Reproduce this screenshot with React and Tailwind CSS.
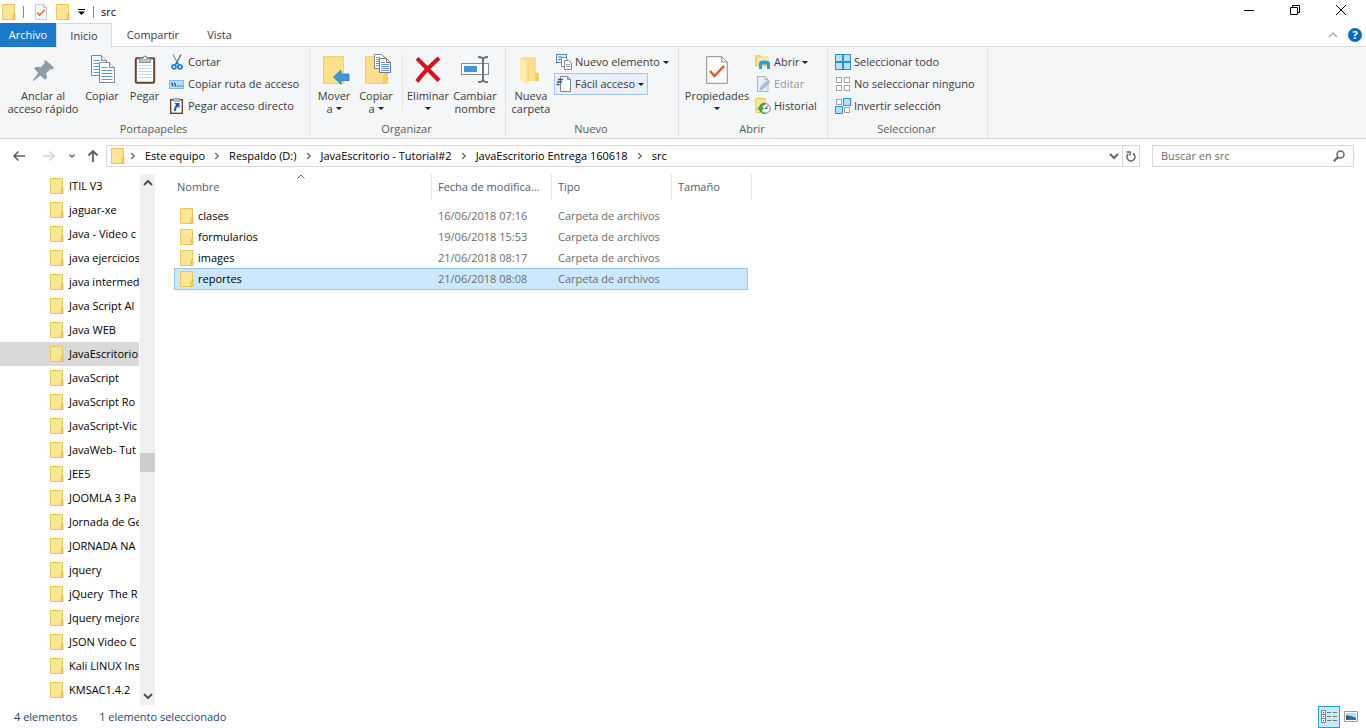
import React from "react";

/* ---------- icons ---------- */

function Folder({ className = "h-4 w-4" }) {
  return (
    <svg viewBox="0 0 16 16" className={`${className} shrink-0`} aria-hidden="true">
      <path d="M1.500.500h12v15h-12z" fill="#ffe594" stroke="#ecc65b" />
      <path d="M12 15.500V10.500l2-1.500v6.500z" fill="#f7d36a" stroke="#e6b93f" strokeWidth=".8" />
    </svg>
  );
}

function Chevron({ className = "" }) {
  return (
    <svg viewBox="0 0 6 8" className={`h-2 w-1.5 shrink-0 ${className}`} fill="none" stroke="#6b6b6b" strokeWidth="1.400" aria-hidden="true">
      <path d="M1.200 1l3 3-3 3" />
    </svg>
  );
}

function Caret() {
  return (
    <svg viewBox="0 0 6 3" className="inline-block h-[3px] w-1.5 shrink-0" fill="#1e1e1e" aria-hidden="true">
      <path d="M0 0h6L3 3z" />
    </svg>
  );
}

function CheckPage({ className }) {
  return (
    <svg viewBox="0 0 22 28" className={className} fill="none" aria-hidden="true">
      <path d="M.7.700h15L21.300 6v21.300H.7z" fill="#fdfdfd" stroke="#8c8c8c" />
      <path d="M15.700.700V6h5.600" stroke="#8c8c8c" />
      <path d="M4 15l4.500 5L18 10" stroke="#e2581f" strokeWidth="2.400" />
    </svg>
  );
}

function PinIcon() {
  return (
    <svg viewBox="0 0 32 32" className="h-8 w-8" aria-hidden="true">
      <path d="M18.500 6l8.500 7.500-1.800 2.200-1.700-.7-4.200 4.200.7 4.800-2 1.800-4.600-4.400L6.500 27 5.800 26.200l5.400-7.100L7 14.600l1.900-1.900 4.700.6L17.800 9l-.8-1.500z" fill="#909ba5" />
    </svg>
  );
}

function Sheet({ x, y }) {
  return (
    <g transform={`translate(${x} ${y})`}>
      <path d="M.5.500h10l5 5v15h-15z" fill="#fff" stroke="#7c8795" />
      <path d="M10.500.500v5h5" fill="#eef3f9" stroke="#7c8795" />
      <path d="M2.500 5.500h6M2.500 8.500h11M2.500 11.500h11M2.500 14.500h11M2.500 17.500h11" stroke="#5b9bdc" />
    </g>
  );
}

function CopyIcon() {
  return (
    <svg viewBox="0 0 32 32" className="h-8 w-8" aria-hidden="true">
      <Sheet x={5} y={1} />
      <Sheet x={13} y={8} />
    </svg>
  );
}

function PasteIcon() {
  return (
    <svg viewBox="0 0 32 32" className="h-8 w-8" aria-hidden="true">
      <rect x="6.800" y="4.300" width="18.400" height="24.400" rx="1" fill="#fdfdff" stroke="#6a4430" strokeWidth="2" />
      <path d="M9 11.500h14M9 14.500h14M9 17.500h14M9 20.500h14M9 23.500h14" stroke="#bcd9f2" />
      <path d="M10.500 4.500h3a2.500 2.500 0 0 1 5 0h3v4h-11z" fill="#b9bfc5" stroke="#8a9097" />
      <circle cx="16" cy="4" r="1" fill="#fff" />
    </svg>
  );
}

function ScissorsIcon() {
  return (
    <svg viewBox="0 0 16 16" className="h-4 w-4" fill="none" aria-hidden="true">
      <path d="M4 .5l5 9.500" stroke="#9aa3ab" strokeWidth="1.600" />
      <path d="M12 .5l-5 9.500" stroke="#6f7c87" strokeWidth="1.600" />
      <circle cx="5" cy="12.800" r="2" stroke="#1d83d2" strokeWidth="1.800" />
      <circle cx="11" cy="12.800" r="2" stroke="#1d83d2" strokeWidth="1.800" />
      <path d="M6 11L8 8.500l2 2.500" stroke="#1d83d2" strokeWidth="1.500" />
    </svg>
  );
}

function PathIcon() {
  return (
    <svg viewBox="0 0 16 16" className="h-4 w-4" fill="none" aria-hidden="true">
      <rect x=".5" y="4.500" width="14" height="8" fill="#b5def8" stroke="#8ab9dc" />
      <path d="M2.500 6.500l1.600 4M5.300 6.500l1.600 4" stroke="#1b4a75" strokeWidth="1.200" />
      <path d="M8 10h1.300M10.200 10h1.300M12.300 10h1.300" stroke="#1b4a75" strokeWidth="1.200" />
    </svg>
  );
}

function PasteShortcutIcon() {
  return (
    <svg viewBox="0 0 16 16" className="h-4 w-4" fill="none" aria-hidden="true">
      <rect x="1.700" y="1.700" width="11.600" height="13.600" fill="#fff" stroke="#6a4430" strokeWidth="1.400" />
      <path d="M4.500.5h6v2.700h-6z" fill="#b9bfc5" stroke="#858b92" strokeWidth=".7" />
      <path d="M5.300 5h5.200v5.200L8.900 8.600C7.400 9.800 7 11.200 7 13H5c0-2.600.6-4.400 2.200-6z" fill="#1b5fa8" />
    </svg>
  );
}

function MoveIcon() {
  return (
    <svg viewBox="0 0 32 32" className="h-8 w-8" aria-hidden="true">
      <path d="M5.500 2.500h20v27h-20z" fill="#fbdf8b" stroke="#efcf72" />
      <path d="M25.500 19.500h1v10h-3V21z" fill="#f3cf6a" />
      <path d="M15.500 23l7.500-7v4h8v6.500h-8v4z" fill="#3d97dc" stroke="#2b7cbe" strokeWidth=".8" />
    </svg>
  );
}

function CopyToIcon() {
  return (
    <svg viewBox="0 0 32 32" className="h-8 w-8" aria-hidden="true">
      <path d="M5.500 2.500h20v27h-20z" fill="#fbdf8b" stroke="#efcf72" />
      <path d="M23.500 29.500V21l4-2v10.500z" fill="#f3cf6a" stroke="#e9c253" strokeWidth=".6" />
      <path d="M14.500.500h7l3 3v11h-10z" fill="#fff" stroke="#7c8795" />
      <path d="M16 3.500h4M16 5.500h4M16 7.500h4M16 9.500h4M16 11.500h4" stroke="#5b9bdc" />
      <path d="M19.500 4.500h7l4 4v10h-11z" fill="#fff" stroke="#6f7a88" />
      <path d="M26.500 4.500v4h4" fill="none" stroke="#6f7a88" />
      <path d="M21 8.500h4M21 10.500h8M21 12.500h8M21 14.500h8M21 16.500h8" stroke="#5b9bdc" />
    </svg>
  );
}

function DeleteIcon() {
  return (
    <svg viewBox="0 0 32 32" className="h-8 w-8" aria-hidden="true">
      <path d="M5 4.500c4 3.500 16 16 22 22M27 4C21 9.500 9 21.500 5 27.500" stroke="#d8121c" strokeWidth="4.200" fill="none" />
    </svg>
  );
}

function RenameIcon() {
  return (
    <svg viewBox="0 0 32 32" className="h-8 w-8" fill="none" aria-hidden="true">
      <rect x="2.500" y="9.500" width="27" height="11" fill="#fff" stroke="#858c93" />
      <path d="M5 12h13v6H5z" fill="#3d97dc" />
      <path d="M19 3c3 0 5 1 5 2.500C24 4 26 3 29 3M24 5v22M19 28c3 0 5-1 5-2.500 0 1.500 2 2.500 5 2.500" stroke="#6c7278" strokeWidth="2" />
    </svg>
  );
}

function NewFolderIcon() {
  return (
    <svg viewBox="0 0 32 32" className="h-8 w-8" aria-hidden="true">
      <path d="M5 4l4-1h12v16h3v8H9z" fill="#fbdf8b" />
      <path d="M20 20l2-1.500 2 1.500v7h-4z" fill="#f0cb68" />
      <path d="M5 4l8 4v22l-8-3.500z" fill="#fdeaae" />
      <path d="M13 8v20" stroke="#efcf72" />
    </svg>
  );
}

function NewItemIcon() {
  return (
    <svg viewBox="0 0 16 16" className="h-4 w-4" fill="none" aria-hidden="true">
      <rect x=".5" y=".5" width="10" height="8" fill="#d9ecfa" stroke="#5385ad" />
      <path d="M2.500 3h3M2.500 5.500h2" stroke="#2e7bbb" />
      <path d="M5.500 3.500h4l2 2v7h-6z" fill="#fff" stroke="#7f8993" />
      <path d="M8.500 6.500h4l3 2.500v6.500h-7z" fill="#fff" stroke="#7f8993" />
      <path d="M10 10.500h4M10 12.500h4" stroke="#8fa3b5" />
    </svg>
  );
}

function EasyAccessIcon() {
  return (
    <svg viewBox="0 0 16 16" className="h-4 w-4" fill="none" aria-hidden="true">
      <path d="M4.500.500h7l3 3v12h-10z" fill="#fff" stroke="#7d848b" />
      <path d="M11.500.500v3h3" stroke="#7d848b" />
      <path d="M2 3.500h5M1 6h5M.5 8.500h3" stroke="#1d5f97" strokeWidth="1.300" />
    </svg>
  );
}

function OpenIcon() {
  return (
    <svg viewBox="0 0 16 16" className="h-4 w-4" aria-hidden="true">
      <path d="M.5 1.500h5l1 1.500h7v9H.5z" fill="#f7d77c" stroke="#eac45c" strokeWidth=".7" />
      <path d="M2 4l12-1v7H2z" fill="#fce9b0" />
      <path d="M4 15V9.500C4 7.500 5.500 6.500 9.500 6.500S15 7.500 15 9.500V15h-3v-4.500H7V15z" fill="#2ba0dc" />
    </svg>
  );
}

function EditIcon() {
  return (
    <svg viewBox="0 0 16 16" className="h-4 w-4" fill="none" aria-hidden="true">
      <path d="M2.500.500h7.500l3 3v12H2.500z" fill="#e8edf6" stroke="#aab3c4" />
      <path d="M10 .5v3h3" stroke="#aab3c4" />
      <path d="M6 10.500L13 4l2 2-7 7-3 1z" fill="#a9bedd" stroke="#94abce" strokeWidth=".6" />
    </svg>
  );
}

function HistoryIcon() {
  return (
    <svg viewBox="0 0 16 16" className="h-4 w-4" fill="none" aria-hidden="true">
      <path d="M.8.500h9.700v14H.8z" fill="#ffe594" stroke="#ecc65b" />
      <circle cx="10.500" cy="10.500" r="4.800" fill="#f1f3f4" stroke="#80878d" />
      <path d="M10 10.500L13 8M10 10.500h2.500" stroke="#60676d" />
      <path d="M9.500 5C5.500 5.200 4.200 8 4.300 10H2.500l3.300 4L8.600 10H6.800c.1-1.800 1-2.800 2.700-3z" fill="#3fae3c" stroke="#2c8b2b" strokeWidth=".5" />
      <path d="M6 13.500c1 1.500 3 2.200 5 1.800" stroke="#3fae3c" strokeWidth="1.300" />
    </svg>
  );
}

const SQUARES = [[0, 0], [8, 0], [0, 8], [8, 8]];

function SelectAllIcon() {
  return (
    <svg viewBox="0 0 16 16" className="h-4 w-4" aria-hidden="true">
      {SQUARES.map(([x, y]) => (
        <rect key={`${x}-${y}`} x={x + 0.5} y={y + 0.5} width="7" height="7" fill="#b9e1fb" stroke="#2f8fd3" />
      ))}
    </svg>
  );
}

function SelectNoneIcon() {
  return (
    <svg viewBox="0 0 16 16" className="h-4 w-4" aria-hidden="true">
      {SQUARES.map(([x, y]) => (
        <rect key={`${x}-${y}`} x={x + 1.5} y={y + 1.5} width="5" height="5" fill="#fff" stroke="#a3a3a3" />
      ))}
    </svg>
  );
}

function InvertIcon() {
  return (
    <svg viewBox="0 0 16 16" className="h-4 w-4" aria-hidden="true">
      <rect x="1.500" y="1.500" width="5" height="5" fill="#fff" stroke="#a3a3a3" />
      <rect x="9.500" y="9.500" width="5" height="5" fill="#fff" stroke="#a3a3a3" />
      <rect x="8.500" y=".5" width="7" height="7" fill="#b9e1fb" stroke="#2f8fd3" />
      <rect x=".5" y="8.500" width="7" height="7" fill="#b9e1fb" stroke="#2f8fd3" />
    </svg>
  );
}

/* ---------- ribbon parts ---------- */

function BigButton({ icon, lines, caret, className }) {
  return (
    <button type="button" className={`flex shrink-0 flex-col items-center gap-[3px] pt-[7px] leading-[13px] whitespace-nowrap ${className}`}>
      {icon}
      <span className="flex flex-col items-center">
        {lines.map((line, i) => (
          <span key={line} className="flex h-[13px] items-center gap-[3px]">
            {line}
            {caret && i === lines.length - 1 && lines.length > 1 && <Caret />}
          </span>
        ))}
        {caret && lines.length === 1 && <span className="flex h-[13px] items-center"><Caret /></span>}
      </span>
    </button>
  );
}

function SmallButton({ icon, label, caret, active, disabled }) {
  const box = active ? "border-[#a4c5ee] bg-[#e8effa]" : "border-transparent";
  return (
    <button type="button" disabled={disabled} className={`flex h-[22px] items-center gap-[3px] border px-px pr-[3px] whitespace-nowrap disabled:text-[#9a9a9a] ${box}`}>
      {icon}
      <span>{label}</span>
      {caret && <Caret />}
    </button>
  );
}

function Group({ label, className, children }) {
  return (
    <section aria-label={label} className={`flex shrink-0 flex-col border-r border-[#e2e3e4] ${className}`}>
      <div className="flex h-[74px]">{children}</div>
      <div className="pr-0.5 text-center leading-4 text-[#5c5c5c]">{label}</div>
    </section>
  );
}

function Stack({ children, className = "" }) {
  return <div className={`flex flex-col items-start pt-1 ${className}`}>{children}</div>;
}

/* ---------- data ---------- */

const TREE = [
  "ITIL V3", "jaguar-xe", "Java - Video c", "java ejercicios", "java intermed", "Java Script Al",
  "Java WEB", "JavaEscritorio", "JavaScript", "JavaScript Ro", "JavaScript-Vic", "JavaWeb- Tut",
  "JEE5", "JOOMLA 3 Pa", "Jornada de Ge", "JORNADA NA", "jquery", "jQuery  The R",
  "Jquery mejora", "JSON Video C", "Kali LINUX Ins", "KMSAC1.4.2",
];

const FILES = [
  ["clases", "16/06/2018 07:16"],
  ["formularios", "19/06/2018 15:53"],
  ["images", "21/06/2018 08:17"],
  ["reportes", "21/06/2018 08:08"],
];

const CRUMBS = ["Este equipo", "Respaldo (D:)", "JavaEscritorio - Tutorial#2", "JavaEscritorio Entrega 160618", "src"];

function TitleBar() {
  return (
    <header className="flex h-[23px] shrink-0 items-center justify-between">
      <div className="flex items-center pl-px text-black">
        <Folder />
        <span className="ml-1.5 h-3 w-px bg-[#8a8a8a]" />
        <button type="button" aria-label="Propiedades" className="ml-[11px]"><CheckPage className="h-4 w-3" /></button>
        <button type="button" aria-label="Nueva carpeta" className="ml-2"><Folder /></button>
        <button type="button" aria-label="Personalizar barra" className="ml-[7px]">
          <svg viewBox="0 0 7 6" className="h-1.5 w-[7px]" aria-hidden="true"><path d="M0 0h7v1H0zM0 2.500h7L3.500 6z" /></svg>
        </button>
        <span className="ml-2 h-3 w-px bg-[#8a8a8a]" />
        <h1 className="ml-[7px]">src</h1>
      </div>
      <div className="flex items-center gap-9 pr-5 pb-[3px]">
        <button type="button" aria-label="Minimizar">
          <svg viewBox="0 0 10 10" className="h-2.5 w-2.5" aria-hidden="true"><path d="M0 5.500h10" stroke="#000" /></svg>
        </button>
        <button type="button" aria-label="Restaurar">
          <svg viewBox="0 0 10 10" className="h-2.5 w-2.5" fill="none" stroke="#000" aria-hidden="true"><path d="M.5 2.500h7v7h-7zM2.500 2.500v-2h7v7h-2" /></svg>
        </button>
        <button type="button" aria-label="Cerrar">
          <svg viewBox="0 0 10 10" className="h-2.5 w-2.5" stroke="#000" aria-hidden="true"><path d="M0 0l10 10M10 0L0 10" /></svg>
        </button>
      </div>
    </header>
  );
}

function Tabs() {
  return (
    <nav className="flex h-6 shrink-0 items-stretch text-[#3b3b3b]">
      <button type="button" className="w-14 bg-[#1979ca] text-white">Archivo</button>
      <button type="button" className="w-14 border-x border-t border-[#dadbdc] bg-[#f5f6f7]">Inicio</button>
      <div className="flex grow items-center border-b border-[#dadbdc]">
        <button type="button" className="w-[82px]">Compartir</button>
        <button type="button" className="w-[51px]">Vista</button>
        <button type="button" aria-label="Contraer cinta" className="ml-auto">
          <svg viewBox="0 0 10 6" className="h-1.5 w-2.5" fill="none" stroke="#a8a8a8" strokeWidth="1.400" aria-hidden="true"><path d="M1 5l4-4 4 4" /></svg>
        </button>
        <button type="button" aria-label="Ayuda" className="mr-1 ml-[10px] h-3.5 w-3.5 rounded-full bg-[#0d6cc0] leading-[14px] font-bold text-white">?</button>
      </div>
    </nav>
  );
}

function Ribbon() {
  return (
    <div className="flex h-[92px] shrink-0 overflow-hidden border-b border-[#dadbdc] bg-[#f5f6f7] text-[#3b3b3b]">
      <Group label="Portapapeles" className="w-[310px]">
        <BigButton icon={<PinIcon />} lines={["Anclar al", "acceso rápido"]} className="ml-1 w-[78px]" />
        <BigButton icon={<CopyIcon />} lines={["Copiar"]} className="w-10" />
        <BigButton icon={<PasteIcon />} lines={["Pegar"]} className="w-[45px]" />
        <Stack>
          <SmallButton icon={<ScissorsIcon />} label="Cortar" />
          <SmallButton icon={<PathIcon />} label="Copiar ruta de acceso" />
          <SmallButton icon={<PasteShortcutIcon />} label="Pegar acceso directo" />
        </Stack>
      </Group>
      <Group label="Organizar" className="w-[196px]">
        <BigButton icon={<MoveIcon />} lines={["Mover", "a"]} caret className="ml-[3px] w-[42px]" />
        <BigButton icon={<CopyToIcon />} lines={["Copiar", "a"]} caret className="w-[42px]" />
        <span className="mt-2 ml-[5px] h-14 w-px shrink-0 bg-[#e2e3e4]" />
        <BigButton icon={<DeleteIcon />} lines={["Eliminar"]} caret className="ml-0.5 w-[46px]" />
        <BigButton icon={<RenameIcon />} lines={["Cambiar", "nombre"]} className="w-12" />
      </Group>
      <Group label="Nuevo" className="w-[173px]">
        <BigButton icon={<NewFolderIcon />} lines={["Nueva", "carpeta"]} className="ml-0.5 w-[46px]" />
        <Stack>
          <SmallButton icon={<NewItemIcon />} label="Nuevo elemento" caret />
          <SmallButton icon={<EasyAccessIcon />} label="Fácil acceso" caret active />
        </Stack>
      </Group>
      <Group label="Abrir" className="w-[149px]">
        <BigButton
          icon={<span className="flex h-8 items-center"><CheckPage className="h-7 w-[22px]" /></span>}
          lines={["Propiedades"]}
          caret
          className="ml-0.5 w-[72px]"
        />
        <Stack>
          <SmallButton icon={<OpenIcon />} label="Abrir" caret />
          <SmallButton icon={<EditIcon />} label="Editar" disabled />
          <SmallButton icon={<HistoryIcon />} label="Historial" />
        </Stack>
      </Group>
      <Group label="Seleccionar" className="w-[160px]">
        <Stack className="ml-[5px]">
          <SmallButton icon={<SelectAllIcon />} label="Seleccionar todo" />
          <SmallButton icon={<SelectNoneIcon />} label="No seleccionar ninguno" />
          <SmallButton icon={<InvertIcon />} label="Invertir selección" />
        </Stack>
      </Group>
    </div>
  );
}

function AddressRow() {
  return (
    <div className="flex h-[34px] shrink-0 items-center">
      <div className="flex w-[106px] shrink-0 items-center pl-3">
        <button type="button" aria-label="Atrás">
          <svg viewBox="0 0 14 12" className="h-3 w-3.5" fill="none" stroke="#5f5f5f" strokeWidth="1.600" aria-hidden="true"><path d="M13 6H2M6.500 1.500L2 6l4.500 4.500" /></svg>
        </button>
        <button type="button" aria-label="Adelante" className="ml-4" disabled>
          <svg viewBox="0 0 14 12" className="h-3 w-3.5" fill="none" stroke="#d4d4d4" strokeWidth="1.600" aria-hidden="true"><path d="M1 6h11M7.500 1.500L12 6l-4.500 4.500" /></svg>
        </button>
        <button type="button" aria-label="Recientes" className="ml-3">
          <svg viewBox="0 0 8 6" className="h-1.5 w-2" fill="none" stroke="#757575" strokeWidth="1.600" aria-hidden="true"><path d="M1.500 1.500L4 4l2.500-2.500" /></svg>
        </button>
        <button type="button" aria-label="Subir" className="ml-[11px]">
          <svg viewBox="0 0 12 14" className="h-3.5 w-3" fill="none" stroke="#5f5f5f" strokeWidth="1.800" aria-hidden="true"><path d="M6 13V2M1.500 6.500L6 2l4.500 4.500" /></svg>
        </button>
      </div>
      <div className="flex h-[22px] min-w-0 grow items-center border border-[#d9d9d9] text-black">
        <Folder className="ml-[3px] h-4 w-4" />
        <ol className="flex items-center whitespace-nowrap">
          {CRUMBS.map((c) => (
            <li key={c} className="flex items-center gap-[9px] pl-[9px] first:pl-1">
              <Chevron />
              <button type="button">{c}</button>
            </li>
          ))}
        </ol>
        <button type="button" aria-label="Ubicaciones anteriores" className="ml-auto">
          <svg viewBox="0 0 10 7" className="h-[7px] w-2.5" fill="none" stroke="#666" strokeWidth="2" aria-hidden="true"><path d="M1 1l4 4 4-4" /></svg>
        </button>
        <button type="button" aria-label="Actualizar" className="ml-[3px] flex h-full w-[17px] items-center justify-center border-l border-[#d9d9d9]">
          <svg viewBox="0 0 10 11" className="h-[11px] w-2.5" fill="none" stroke="#666" strokeWidth="1.500" aria-hidden="true"><path d="M2.300 3A4 4 0 1 0 7 2.500" /><path d="M.5 1h3.500v3.500" /></svg>
        </button>
      </div>
      <form role="search" className="mr-3 ml-3 flex h-[22px] w-[202px] shrink-0 items-center border border-[#d9d9d9] pr-2 pl-2">
        <input aria-label="Buscar en src" placeholder="Buscar en src" className="min-w-0 grow bg-transparent outline-none placeholder:text-[#6d6d6d]" />
        <svg viewBox="0 0 12 12" className="h-3 w-3 shrink-0" fill="none" stroke="#666" aria-hidden="true"><circle cx="7.500" cy="4.500" r="3.500" strokeWidth="1.500" /><path d="M5 7L.8 11.200" strokeWidth="2" /></svg>
      </form>
    </div>
  );
}

function Sidebar() {
  return (
    <aside className="flex w-[156px] shrink-0">
      <ul className="mr-px w-[139px] overflow-hidden text-black">
        {TREE.map((name) => (
          <li key={name} className={`flex h-6 items-center gap-1 pl-[49px] whitespace-pre ${name === "JavaEscritorio" ? "bg-[#d9d9d9]" : ""}`}>
            <Folder />
            <span>{name}</span>
          </li>
        ))}
      </ul>
      <div className="flex w-[15px] flex-col bg-[#f0f0f0]">
        <button type="button" aria-label="Desplazar arriba" className="flex h-[17px] items-center justify-center">
          <svg viewBox="0 0 10 7" className="h-[7px] w-2.5" fill="none" stroke="#505050" strokeWidth="2" aria-hidden="true"><path d="M1 6l4-4 4 4" /></svg>
        </button>
        <div className="grow-[262]" />
        <div className="h-[19px] bg-[#cdcdcd]" />
        <div className="grow-[216]" />
        <button type="button" aria-label="Desplazar abajo" className="flex h-[17px] items-center justify-center">
          <svg viewBox="0 0 10 7" className="h-[7px] w-2.5" fill="none" stroke="#505050" strokeWidth="2" aria-hidden="true"><path d="M1 1l4 4 4-4" /></svg>
        </button>
      </div>
    </aside>
  );
}

function FileTable() {
  return (
    <main className="min-w-0 grow pl-[18px]">
      <table className="table-fixed border-separate border-spacing-0 text-left whitespace-nowrap">
        <colgroup>
          <col className="w-[258px]" />
          <col className="w-[120px]" />
          <col className="w-[120px]" />
          <col className="w-[76px]" />
          <col className="w-1" />
        </colgroup>
        <thead>
          <tr className="h-[26px] text-[#4c607a]">
            <th className="relative border-r border-[#e5e5e5] pl-[3px] font-normal">
              Nombre
              <svg viewBox="0 0 8 5" className="absolute top-0 left-[123px] h-[5px] w-2" fill="none" stroke="#6b6b6b" aria-hidden="true"><path d="M.5 4.500L4 1l3.500 3.500" /></svg>
            </th>
            <th className="border-r border-[#e5e5e5] pl-1.5 font-normal">Fecha de modifica...</th>
            <th className="border-r border-[#e5e5e5] pl-1.5 font-normal">Tipo</th>
            <th colSpan={2} className="border-r border-[#e5e5e5] pl-1.5 font-normal">Tamaño</th>
          </tr>
        </thead>
        <tbody className="text-[#6d6d6d] before:block before:h-[5px]">
          {FILES.map(([name, date]) => {
            const on = name === "reportes";
            const cell = on ? "border-y border-[#99c9ef] bg-[#cce8ff]" : "";
            return (
              <tr key={name} className={on ? "h-[22px]" : "h-[21px]"}>
                <td className={`text-black ${cell} ${on ? "border-l pl-1" : "pl-[5px]"}`}>
                  <span className="flex items-center gap-[3px]"><Folder />{name}</span>
                </td>
                <td className={`pl-1.5 ${cell}`}>{date}</td>
                <td className={`pl-1.5 ${cell}`}>Carpeta de archivos</td>
                <td className={`${cell} ${on ? "border-r" : ""}`} />
              </tr>
            );
          })}
        </tbody>
      </table>
    </main>
  );
}

function StatusBar() {
  return (
    <footer className="flex h-[23px] shrink-0 items-center text-[#26436e]">
      <span className="ml-[14px]">4 elementos</span>
      <span className="ml-[22px]">1 elemento seleccionado</span>
      <button type="button" aria-label="Detalles" className="ml-auto flex h-[22px] w-[22px] items-center justify-center border border-[#26a0da] bg-[#cbe8f6]">
        <svg viewBox="0 0 16 14" className="h-3.5 w-4" fill="none" aria-hidden="true">
          <path d="M.5.500h4v4h-4zM.5 4.500h4v4h-4zM.5 8.500h4v4h-4z" fill="#fff" stroke="#808080" />
          <path d="M2 2.500h1M2 6.500h1M2 10.500h1" stroke="#333" />
          <path d="M6 2.500h4M11.500 2.500H16M6 6.500h4M11.500 6.500H16M6 10.500h4M11.500 10.500H16" stroke="#6f7a80" />
        </svg>
      </button>
      <button type="button" aria-label="Iconos grandes" className="mr-2 ml-1">
        <svg viewBox="0 0 14 11" className="h-[11px] w-3.5" aria-hidden="true">
          <path d="M.5.500h13v10H.5z" fill="#fff" stroke="#9b9b9b" />
          <path d="M2 2h10v3.500H2z" fill="#b7dcf5" />
          <path d="M2 4l5 1 5 1.500V9H2z" fill="#2f6fae" />
          <path d="M2 5l4 2-4 2z" fill="#2d5c4b" />
        </svg>
      </button>
    </footer>
  );
}

export default function App() {
  return (
    <div className="flex min-h-screen flex-col bg-white font-['Open_Sans','Noto_Sans',sans-serif] text-[11px] leading-4">
      <TitleBar />
      <Tabs />
      <Ribbon />
      <AddressRow />
      <div className="flex grow pt-px">
        <Sidebar />
        <FileTable />
      </div>
      <StatusBar />
    </div>
  );
}
